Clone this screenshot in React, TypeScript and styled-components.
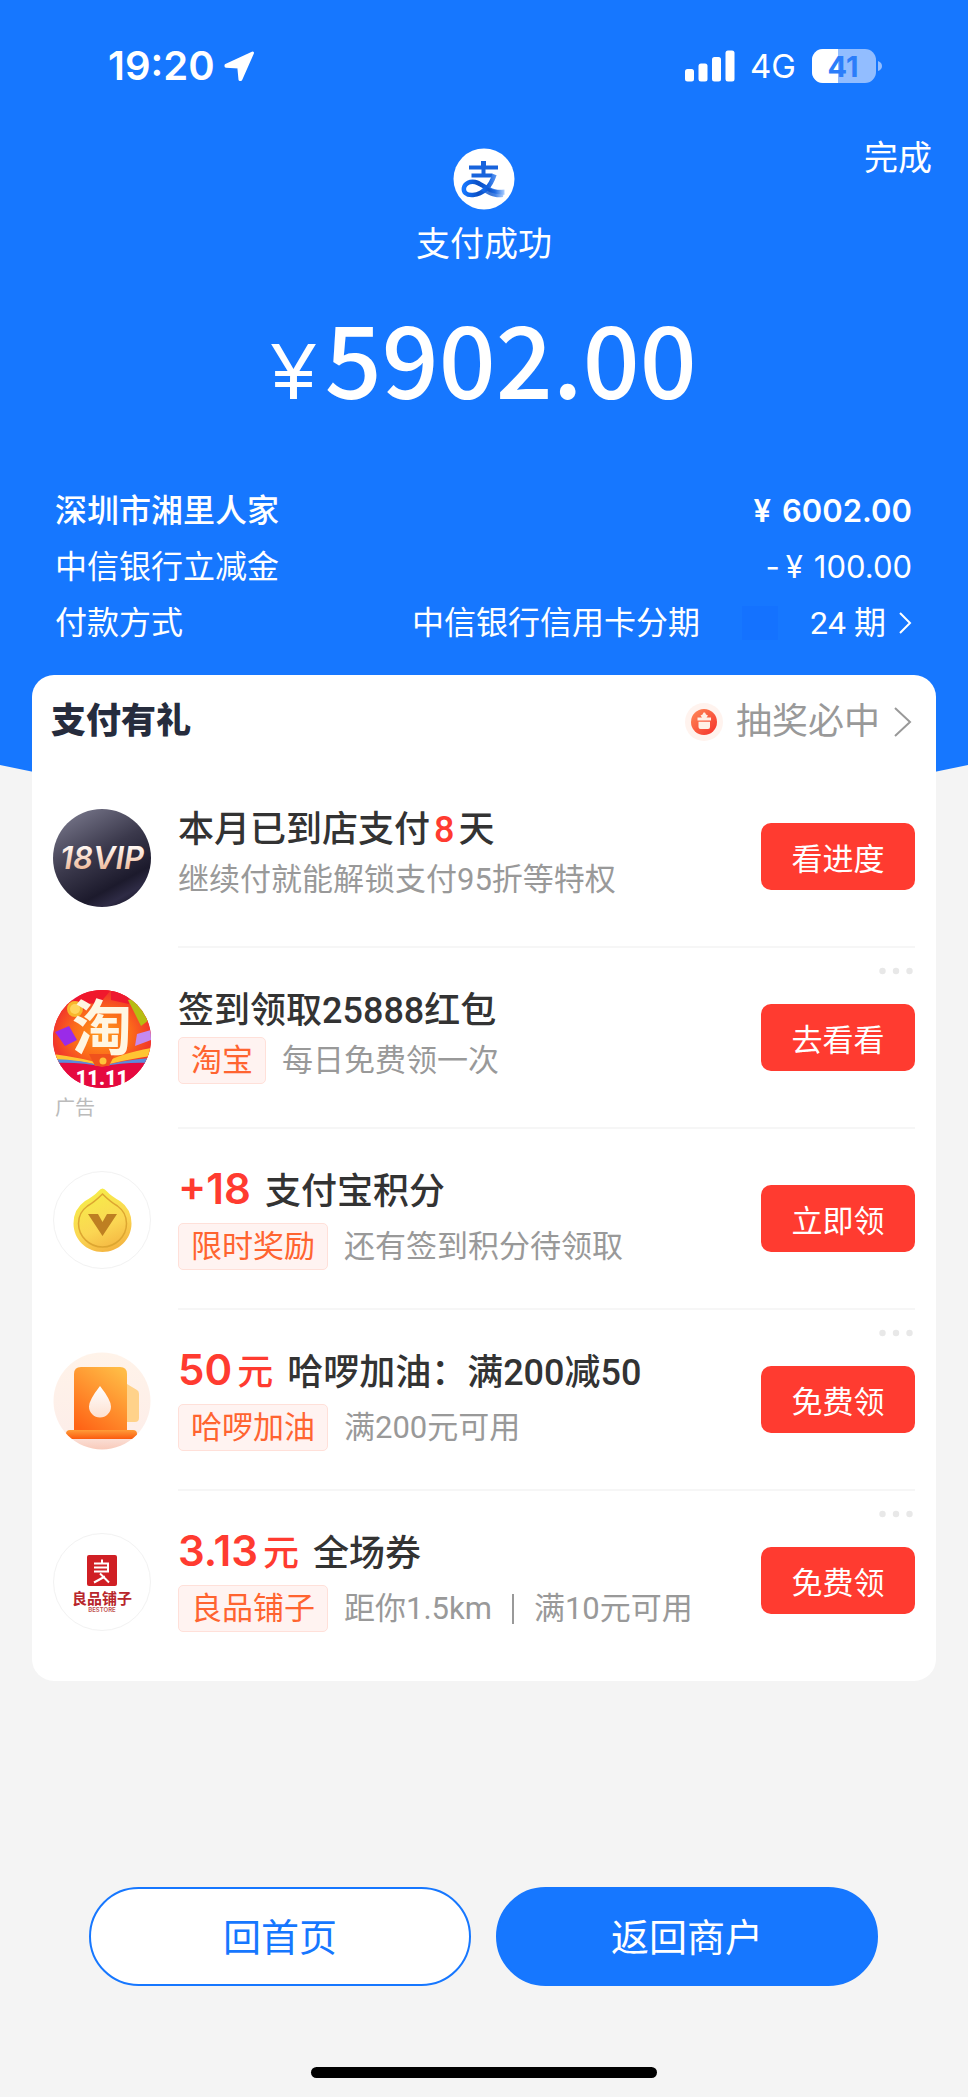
import React from "react";
import styled, { createGlobalStyle } from "styled-components";

const GlobalStyle = createGlobalStyle`
  * { box-sizing: border-box; }
  body {
    margin: 0;
    background: #f4f4f4;
    font-family: Roboto, "Noto Sans CJK SC", sans-serif;
    color: #333;
  }
  button { font-family: inherit; cursor: pointer; }
  a { color: inherit; text-decoration: none; }
  svg { display: block; flex: none; overflow: visible; }
`;

const Page = styled.div`
  min-height: 100vh;
  display: flex;
  flex-direction: column;
`;

const Header = styled.header`
  background: #1677ff;
  color: #fff;
  padding: 42px 0 122px;
  clip-path: polygon(0 0, 100% 0, 100% calc(100% - 8px), 96% 100%, 4% 100%, 0 calc(100% - 8px));
`;

const StatusBar = styled.div`
  display: flex;
  justify-content: space-between;
  align-items: center;
  height: 48px;
  padding: 0 86px 0 108px;
  font-family: Inter, sans-serif;
`;

const StatusGroup = styled.div<{ $gap: number }>`
  display: flex;
  align-items: center;
  gap: ${(p) => p.$gap}px;
`;

const Time = styled.span`
  font-size: 40px;
  line-height: 48px;
  font-weight: 600;
`;

const Network = styled.span`
  font-size: 33px;
  line-height: 48px;
`;

const NavRow = styled.div`
  display: grid;
  grid-template-columns: 1fr auto 1fr;
  align-items: start;
  margin-top: 44px;
  padding: 0 36px;
`;

const Logo = styled.div`
  grid-column: 2;
  margin-top: 14px;
`;

const DoneLink = styled.a`
  justify-self: end;
  font-size: 34px;
  line-height: 48px;
`;

const Result = styled.h1`
  margin: 10px 0 0;
  text-align: center;
  font-size: 34px;
  line-height: 48px;
  font-weight: 400;
`;

const Amount = styled.p`
  margin: 28px 0 67px;
  display: flex;
  justify-content: center;
  align-items: baseline;
  gap: 9px;
  font-family: "Noto Sans CJK SC", sans-serif;
  font-size: 100px;
  line-height: 120px;
  font-weight: 500;
`;

const Currency = styled.span`
  font-family: "Liberation Sans", sans-serif;
  font-size: 80px;
  line-height: 80px;
  font-weight: 400;
`;

const Details = styled.dl`
  margin: 0;
  padding: 0 56px 0 55px;
`;

const DetailRow = styled.div<{ $strong?: boolean }>`
  display: flex;
  justify-content: space-between;
  font-size: 32px;
  line-height: 56px;
  font-weight: ${(p) => (p.$strong ? 500 : 400)};
`;

const DetailValue = styled.dd`
  margin: 0;
  display: flex;
  align-items: center;
  gap: 12px;
`;

const Money = styled.span<{ $strong?: boolean }>`
  display: flex;
  gap: 11px;
  font-family: Inter, sans-serif;
  font-size: 31px;
  font-weight: ${(p) => (p.$strong ? 600 : 400)};
`;

const Sign = styled.span`
  display: flex;
  gap: 6px;
`;

const Redaction = styled.span`
  width: 36px;
  height: 34px;
  margin: 0 20px 0 30px;
  background: #1472ff;
`;

const Card = styled.section`
  margin: -98px 32px 0;
  padding-bottom: 9px;
  background: #fff;
  border-radius: 22px;
  position: relative;
`;

const CardHeader = styled.div`
  display: flex;
  justify-content: space-between;
  align-items: center;
  height: 92px;
  padding: 2px 24px 0 19px;
`;

const CardTitle = styled.h2`
  margin: 0;
  font-size: 35px;
  line-height: 48px;
  font-weight: 900;
  color: #262c3d;
`;

const LotteryLink = styled.a`
  display: flex;
  align-items: center;
  gap: 13px;
  font-size: 36px;
  line-height: 48px;
  color: #999;
`;

const OfferList = styled.ul`
  list-style: none;
  margin: 0;
  padding: 0 21px;
`;

const Offer = styled.li`
  position: relative;
  display: flex;
  height: 181px;
`;

const AvatarColumn = styled.div`
  width: 125px;
  flex: none;
  padding-top: 42px;
`;

const AdLabel = styled.div`
  margin-top: 8px;
  padding-left: 2px;
  font-size: 20px;
  line-height: 24px;
  color: #bbb;
`;

const OfferBody = styled.div`
  flex: 1;
  display: flex;
  justify-content: space-between;
  align-items: flex-start;
  ${Offer}:not(:last-child) & { border-bottom: 2px solid #f6f6f6; }
`;

const OfferText = styled.div<{ $roomy?: boolean }>`
  display: flex;
  flex-direction: column;
  gap: ${(p) => (p.$roomy ? 10 : 2)}px;
  padding-top: ${(p) => (p.$roomy ? 36 : 39)}px;
`;

const OfferTitle = styled.h3`
  margin: 0;
  display: flex;
  align-items: baseline;
  font-size: 36px;
  line-height: 48px;
  height: 48px;
  font-weight: 500;
`;

const Red = styled.span`
  color: #ff3b30;
`;

const Count = styled(Red)`
  margin: 0 4px;
`;

const Prize = styled(Red)`
  display: flex;
  align-items: baseline;
  gap: 5px;
  margin-right: 14px;
`;

const PrizeNumber = styled.span`
  font-family: Inter, sans-serif;
  font-size: 42px;
  font-weight: 600;
`;

const OfferInfo = styled.div`
  display: flex;
  align-items: center;
  gap: 16px;
  height: 47px;
  font-size: 31px;
  line-height: 45px;
  color: #999;
`;

const Tag = styled.span`
  padding: 0 12px;
  border: 1px solid #ffe0d9;
  border-radius: 5px;
  background: #fff3f1;
  color: #ff6430;
`;

const Divider = styled.span`
  width: 2px;
  height: 30px;
  margin: 0 4px;
  background: #999;
`;

const ClaimButton = styled.button`
  width: 154px;
  height: 67px;
  margin-top: 56px;
  padding: 0;
  border: 0;
  border-radius: 10px;
  background: #ff3b30;
  color: #fff;
  font-size: 31px;
`;

const MoreButton = styled.button`
  position: absolute;
  top: 13px;
  right: 0;
  padding: 6px 2px;
  border: 0;
  background: none;
`;

const Actions = styled.div`
  display: flex;
  gap: 25px;
  margin-top: auto;
  padding: 48px 90px 81px 89px;
`;

const ActionButton = styled.button<{ $primary?: boolean }>`
  flex: 1;
  height: 99px;
  padding: 0 0 4px;
  border: 2px solid #1677ff;
  border-radius: 50px;
  background: ${(p) => (p.$primary ? "#1677ff" : "#fff")};
  color: ${(p) => (p.$primary ? "#fff" : "#1677ff")};
  font-size: 38px;
`;

const HomeBar = styled.div`
  width: 346px;
  height: 11px;
  margin: 0 auto 19px;
  border-radius: 6px;
  background: #000;
`;

const LocationArrow = () => (
  <svg width="33" height="33" viewBox="0 0 33 33" aria-hidden="true">
    <path d="M29.500 3 17.800 29.500h-.8L15.800 17 3 16.300v-1Z" fill="#fff" stroke="#fff" strokeWidth="3" strokeLinejoin="round" />
  </svg>
);

const Signal = () => (
  <svg width="50" height="32" viewBox="0 0 50 32" fill="#fff" aria-hidden="true">
    <rect x="0" y="19" width="9" height="12.500" rx="2.500" />
    <rect x="13.500" y="13.500" width="9" height="18" rx="2.500" />
    <rect x="27" y="7" width="9" height="24.500" rx="2.500" />
    <rect x="40.500" y="0.500" width="9" height="31" rx="2.500" />
  </svg>
);

const Battery = () => (
  <svg width="71" height="36" viewBox="0 0 71 36" role="img" aria-label="41%">
    <defs>
      <clipPath id="cell"><rect x="1" y="1" width="64" height="34" rx="11" /></clipPath>
    </defs>
    <rect x="1" y="1" width="64" height="34" rx="11" fill="#92bdff" />
    <rect x="1" y="1" width="26" height="34" fill="#fff" clipPath="url(#cell)" />
    <path d="M67 13q4 1.500 4 5t-4 5Z" fill="#92bdff" />
    <text x="32" y="28.500" textAnchor="middle" fontFamily="Inter, sans-serif" fontSize="29" fontWeight="700" fill="#2b7dfa">41</text>
  </svg>
);

const AlipayLogo = () => (
  <svg width="62" height="62" viewBox="0 0 62 62" role="img" aria-label="支付宝">
    <defs>
      <linearGradient id="ribbon" x1="0" y1="0" x2="1" y2="0">
        <stop offset="0" stopColor="#1677ff" />
        <stop offset="0.350" stopColor="#0b4fc4" />
        <stop offset="0.600" stopColor="#1463e0" />
        <stop offset="1" stopColor="#a9cdff" />
      </linearGradient>
    </defs>
    <circle cx="31" cy="31" r="30.500" fill="#fff" />
    <path d="M30.500 13v14M16 19.500h29M18.500 27.500h21" stroke="#1763dc" strokeWidth="4" fill="none" />
    <path d="M30.500 13v8" stroke="#1763dc" strokeWidth="5" />
    <path d="M41.500 26.500C38 37 31 46 20 47c-7 .5-10-3-9-7.500 1.200-4.500 6-6.500 11-5.500 8 1.500 13 11 29.500 10.500" stroke="url(#ribbon)" strokeWidth="4.500" fill="none" />
    <path d="M32 38c5 3.500 11 4.500 19.500 3.500l-1.500 7.500C42 50 36 48 28 42Z" fill="url(#ribbon)" opacity="0.800" />
  </svg>
);

const Chevron = ({ width, height, stroke }: { width: number; height: number; stroke: number }) => (
  <svg width={width} height={height} viewBox={`0 0 ${width} ${height}`} fill="none" aria-hidden="true">
    <path d={`M2 2 ${width - 2} ${height / 2} 2 ${height - 2}`} stroke="currentColor" strokeWidth={stroke} />
  </svg>
);

const GiftIcon = () => (
  <svg width="38" height="38" viewBox="0 0 38 38" aria-hidden="true">
    <defs>
      <linearGradient id="gift" x1="0" y1="0" x2="1" y2="1">
        <stop offset="0" stopColor="#ff8a57" />
        <stop offset="1" stopColor="#f5302a" />
      </linearGradient>
    </defs>
    <circle cx="19" cy="19" r="19" fill="#fff3ee" />
    <circle cx="19" cy="19" r="13" fill="url(#gift)" />
    <path d="M12.500 14.500h4.500l-1.500-2 2-1 1-2h1.500l1 2 2 1-1.500 2h4.500v3h-13.500ZM13.500 18.800h11.500v5.200q0 2-2 2h-7.500q-2 0-2-2Z" fill="#fff0e6" />
  </svg>
);

const Dots = () => (
  <svg width="34" height="8" viewBox="0 0 34 8" fill="#e8e8e8" aria-hidden="true">
    <circle cx="3.500" cy="4" r="3.200" />
    <circle cx="17" cy="4" r="3.200" />
    <circle cx="30.500" cy="4" r="3.200" />
  </svg>
);

const VipAvatar = () => (
  <svg width="98" height="98" viewBox="0 0 98 98" aria-hidden="true">
    <defs>
      <linearGradient id="night" x1="0.200" y1="0" x2="0.750" y2="1">
        <stop offset="0" stopColor="#77768a" />
        <stop offset="0.450" stopColor="#3b394c" />
        <stop offset="0.780" stopColor="#1c1a2c" />
        <stop offset="0.900" stopColor="#2e2b45" />
        <stop offset="1" stopColor="#1d1b2e" />
      </linearGradient>
      <linearGradient id="gold" x1="0" y1="0" x2="0" y2="1">
        <stop offset="0.200" stopColor="#fff8f3" />
        <stop offset="0.800" stopColor="#efbd9f" />
      </linearGradient>
    </defs>
    <circle cx="49" cy="49" r="49" fill="url(#night)" />
    <text x="49" y="60" textAnchor="middle" fontFamily="Inter, sans-serif" fontSize="31" fontStyle="italic" fontWeight="600" fill="url(#gold)">18VIP</text>
  </svg>
);

const TaobaoAvatar = () => (
  <svg width="98" height="98" viewBox="0 0 98 98" aria-hidden="true">
    <defs>
      <clipPath id="round"><circle cx="49" cy="49" r="49" /></clipPath>
      <radialGradient id="blaze" cx="0.500" cy="0.550" r="0.500">
        <stop offset="0" stopColor="#ff9a1c" />
        <stop offset="0.600" stopColor="#fb6a1a" />
        <stop offset="1" stopColor="#f2382a" />
      </radialGradient>
    </defs>
    <g clipPath="url(#round)">
      <rect width="98" height="98" fill="#ec1336" />
      <path d="M10 0 30 20 49 0h20l14 20L98 30v50H0V20Z" fill="url(#blaze)" />
      <path d="M30 0h28L46 14 22 12Z" fill="#f0182c" />
      <path d="M58 0h16l2 14-18-4Z" fill="#ee1a30" />
      <path d="M75 10 84 8 96 30 88 36Z" fill="#b6bd12" />
      <path d="M84 44 98 40v10L82 56Z" fill="#c48af0" />
      <path d="M2 42 16 36 24 50 12 56Z" fill="#9a2be8" />
      <path d="M0 64q30 4 49 10Q66 64 98 58v8Q70 70 49 76 30 70 0 70Z" fill="#ffc533" />
      <path d="M0 69q30 1 49 7 22-6 49-8v8H0Z" fill="#5a8bdc" />
      <path d="M0 73q30-1 49 4 20-5 49-4v25H0Z" fill="#e5093f" />
      <path d="M36 64h26l-6 12H42Z" fill="#f0521c" />
      <circle cx="50" cy="71" r="3.500" fill="#ffc23a" />
    </g>
    <circle cx="22" cy="19" r="8" fill="#f8b62c" />
    <circle cx="22" cy="19" r="5" fill="#ffd45c" />
    <text x="49" y="60" textAnchor="middle" fontFamily="'Noto Sans CJK SC', sans-serif" fontSize="60" fontWeight="700" fill="#fff6e2">淘</text>
    <text x="49" y="95" textAnchor="middle" fontFamily="Roboto, sans-serif" fontSize="20" fontWeight="900" fill="#fff">11.11</text>
  </svg>
);

const PointsAvatar = () => (
  <svg width="98" height="98" viewBox="0 0 98 98" aria-hidden="true">
    <defs>
      <linearGradient id="coin" x1="0.300" y1="0" x2="0.700" y2="1">
        <stop offset="0" stopColor="#f6ee48" />
        <stop offset="0.600" stopColor="#fbd653" />
        <stop offset="1" stopColor="#f3b23f" />
      </linearGradient>
    </defs>
    <circle cx="49" cy="49" r="48.500" fill="#fff" stroke="#f2f2f2" />
    <path d="M49.500 17.500q2 0 4 2.500Q58 25 67 30q11.500 8 11.500 22.500c0 16-13 28.500-29 28.500s-29-12.500-29-28.500Q20.500 38 32 30q9-5 13.500-10 2-2.500 4-2.500Z" fill="url(#coin)" />
    <path d="M49.500 23q8 8 15 12 9 6.500 9 17.500c0 13-11 23.500-24 23.500s-24-10.500-24-23.500q0-11 9-17.500 7-4 15-12Z" fill="none" stroke="#dda631" strokeWidth="1.500" />
    <path d="M35 43h10l4.500 8 4.500-8h10L49.500 65Z" fill="#be7f22" />
  </svg>
);

const FuelAvatar = () => (
  <svg width="98" height="98" viewBox="0 0 98 98" aria-hidden="true">
    <defs>
      <clipPath id="disc"><circle cx="49" cy="49" r="48.500" /></clipPath>
      <linearGradient id="haze" x1="0.500" y1="0" x2="0.500" y2="1">
        <stop offset="0" stopColor="#fff3e9" />
        <stop offset="0.800" stopColor="#fdeee9" />
        <stop offset="1" stopColor="#f8c9b9" />
      </linearGradient>
      <linearGradient id="pump" x1="0.800" y1="0" x2="0.200" y2="1">
        <stop offset="0" stopColor="#ffbb45" />
        <stop offset="1" stopColor="#ff6416" />
      </linearGradient>
      <linearGradient id="base" x1="0" y1="0" x2="0" y2="1">
        <stop offset="0" stopColor="#ff9c38" />
        <stop offset="1" stopColor="#fb5a0e" />
      </linearGradient>
      <linearGradient id="drop" x1="0" y1="0" x2="0" y2="1">
        <stop offset="0" stopColor="#fff" />
        <stop offset="1" stopColor="#fde0d0" />
      </linearGradient>
    </defs>
    <g clipPath="url(#disc)">
      <rect width="98" height="98" fill="url(#haze)" />
      <path d="M74 32 84 38q2 1 2 4v24q0 4-4 4h-8Z" fill="#ffd28a" />
      <path d="M21 80V22q0-7 7-7h39q7 0 7 7v58Z" fill="url(#pump)" />
      <rect x="13" y="78" width="71" height="9" rx="4" fill="url(#base)" />
      <path d="M47 34q11 14 11 20.500a11 11 0 0 1-22 0Q36 48 47 34Z" fill="url(#drop)" />
    </g>
  </svg>
);

const SnackAvatar = () => (
  <svg width="98" height="98" viewBox="0 0 98 98" aria-hidden="true">
    <circle cx="49" cy="49" r="48.500" fill="#fff" stroke="#f2f2f2" />
    <rect x="34" y="22" width="30" height="31" rx="2" fill="#d01f24" />
    <path d="M49 26.500v3M41 30.500h15M41 34.500h15M41 38.500h15M55 30.500v8M47 40.500l9 9M52 43.500l-11 6" stroke="#fff" strokeWidth="2" fill="none" />
    <text x="49" y="71" textAnchor="middle" fontFamily="'Noto Sans CJK SC', sans-serif" fontSize="15" fontWeight="700" fill="#b8262b">良品铺子</text>
    <text x="49" y="79" textAnchor="middle" fontFamily="Inter, sans-serif" fontSize="6" fontWeight="600" fill="#c0504f">BESTORE</text>
  </svg>
);

type OfferData = {
  id: string;
  avatar: React.ReactNode;
  title: React.ReactNode;
  prize?: { value: string; unit?: string };
  tag?: string;
  info: string[];
  action: string;
  ad?: boolean;
  more?: boolean;
};

const offers: OfferData[] = [
  {
    id: "vip",
    avatar: <VipAvatar />,
    title: <>本月已到店支付<Count>8</Count>天</>,
    info: ["继续付就能解锁支付95折等特权"],
    action: "看进度",
  },
  { id: "taobao", avatar: <TaobaoAvatar />, title: "签到领取25888红包", tag: "淘宝", info: ["每日免费领一次"], action: "去看看", ad: true, more: true },
  { id: "points", avatar: <PointsAvatar />, prize: { value: "+18" }, title: "支付宝积分", tag: "限时奖励", info: ["还有签到积分待领取"], action: "立即领" },
  { id: "fuel", avatar: <FuelAvatar />, prize: { value: "50", unit: "元" }, title: "哈啰加油：满200减50", tag: "哈啰加油", info: ["满200元可用"], action: "免费领", more: true },
  { id: "snack", avatar: <SnackAvatar />, prize: { value: "3.13", unit: "元" }, title: "全场券", tag: "良品铺子", info: ["距你1.5km", "满10元可用"], action: "免费领", more: true },
];

const OfferRow = ({ offer }: { offer: OfferData }) => (
  <Offer>
    <AvatarColumn>
      {offer.avatar}
      {offer.ad && <AdLabel>广告</AdLabel>}
    </AvatarColumn>
    <OfferBody>
      <OfferText $roomy={Boolean(offer.prize)}>
        <OfferTitle>
          {offer.prize && (
            <Prize>
              <PrizeNumber>{offer.prize.value}</PrizeNumber>
              {offer.prize.unit}
            </Prize>
          )}
          {offer.title}
        </OfferTitle>
        <OfferInfo>
          {offer.tag && <Tag>{offer.tag}</Tag>}
          {offer.info.map((text, i) => (
            <React.Fragment key={text}>
              {i > 0 && <Divider />}
              <span>{text}</span>
            </React.Fragment>
          ))}
        </OfferInfo>
      </OfferText>
      <ClaimButton type="button">{offer.action}</ClaimButton>
    </OfferBody>
    {offer.more && (
      <MoreButton type="button" aria-label="更多">
        <Dots />
      </MoreButton>
    )}
  </Offer>
);

export default function App() {
  return (
    <Page>
      <GlobalStyle />
      <Header>
        <StatusBar>
          <StatusGroup $gap={8}>
            <Time>19:20</Time>
            <LocationArrow />
          </StatusGroup>
          <StatusGroup $gap={15}>
            <Signal />
            <Network>4G</Network>
            <Battery />
          </StatusGroup>
        </StatusBar>
        <NavRow>
          <Logo>
            <AlipayLogo />
          </Logo>
          <DoneLink href="#done">完成</DoneLink>
        </NavRow>
        <Result>支付成功</Result>
        <Amount>
          <Currency>¥</Currency>
          <span>5902.00</span>
        </Amount>
        <Details>
          <DetailRow $strong>
            <dt>深圳市湘里人家</dt>
            <DetailValue>
              <Money $strong>
                <Sign>¥</Sign>
                <span>6002.00</span>
              </Money>
            </DetailValue>
          </DetailRow>
          <DetailRow>
            <dt>中信银行立减金</dt>
            <DetailValue>
              <Money>
                <Sign>
                  <span>-</span>
                  <span>¥</span>
                </Sign>
                <span>100.00</span>
              </Money>
            </DetailValue>
          </DetailRow>
          <DetailRow>
            <dt>付款方式</dt>
            <DetailValue>
              <span>中信银行信用卡分期</span>
              <Redaction />
              <span>24 期</span>
              <Chevron width={14} height={24} stroke={2} />
            </DetailValue>
          </DetailRow>
        </Details>
      </Header>

      <Card>
        <CardHeader>
          <CardTitle>支付有礼</CardTitle>
          <LotteryLink href="#lottery">
            <GiftIcon />
            抽奖必中
            <Chevron width={19} height={32} stroke={2} />
          </LotteryLink>
        </CardHeader>
        <OfferList>
          {offers.map((offer) => (
            <OfferRow key={offer.id} offer={offer} />
          ))}
        </OfferList>
      </Card>

      <Actions>
        <ActionButton type="button">回首页</ActionButton>
        <ActionButton type="button" $primary>返回商户</ActionButton>
      </Actions>
      <HomeBar />
    </Page>
  );
}
